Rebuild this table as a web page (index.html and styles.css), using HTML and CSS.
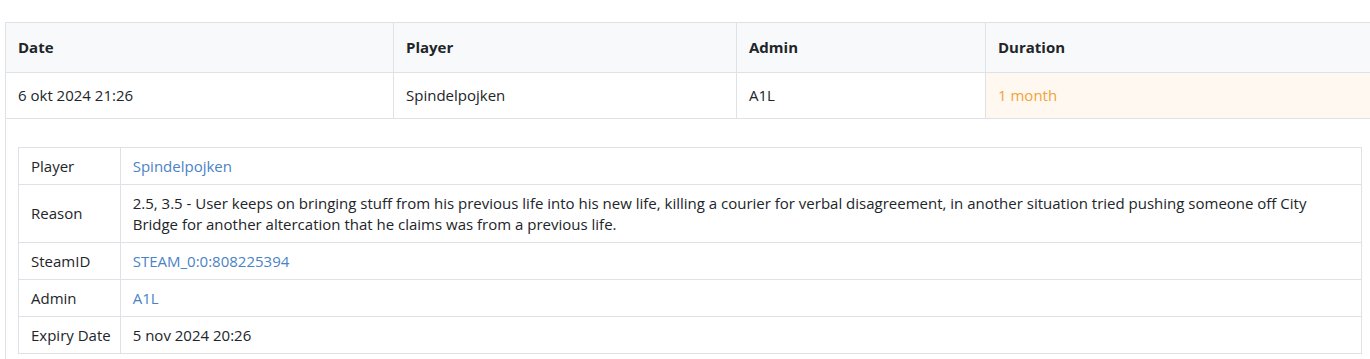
FILE: index.html
```html
<!DOCTYPE html>
<html lang="en">
<head>
<meta charset="utf-8">
<title>Ban details</title>
<link rel="stylesheet" href="styles.css">
</head>
<body>
<div class="page">
  <table class="bans">
    <thead>
      <tr>
        <th class="col-date">Date</th>
        <th class="col-player">Player</th>
        <th class="col-admin">Admin</th>
        <th class="col-duration">Duration</th>
      </tr>
    </thead>
    <tbody>
      <tr>
        <td>6 okt 2024 21:26</td>
        <td>Spindelpojken</td>
        <td>A1L</td>
        <td class="duration">1 month</td>
      </tr>
      <tr>
        <td colspan="4" class="detail-cell">
          <table class="details">
            <tbody>
              <tr><td class="label">Player</td><td><a href="#">Spindelpojken</a></td></tr>
              <tr><td class="label">Reason</td><td>2.5, 3.5 - User keeps on bringing stuff from his previous life into his new life, killing a courier for verbal disagreement, in another situation tried pushing someone off City Bridge for another altercation that he claims was from a previous life.</td></tr>
              <tr><td class="label">SteamID</td><td><a href="#">STEAM_0:0:808225394</a></td></tr>
              <tr><td class="label">Admin</td><td><a href="#">A1L</a></td></tr>
              <tr><td class="label">Expiry Date</td><td>5 nov 2024 20:26</td></tr>
            </tbody>
          </table>
        </td>
      </tr>
    </tbody>
  </table>
</div>
</body>
</html>
```
FILE: styles.css
```css
html, body {
  margin: 0;
  padding: 0;
  overflow: hidden;
  background: #fff;
}
body {
  font-family: "Open Sans", "Liberation Sans", sans-serif;
  font-size: 15px;
  line-height: 21px;
  color: #212529;
}
.page {
  padding: 22px 0 0 5px;
}
.bans {
  border-collapse: collapse;
  table-layout: fixed;
  width: 1369px;
}
.bans th,
.bans td {
  box-sizing: border-box;
  border: 1px solid #dee2e6;
  text-align: left;
  vertical-align: middle;
  padding: 12px 12px;
}
.bans th {
  background: #f8f9fa;
  font-weight: 700;
  padding: 14px 12px;
}
.col-date { width: 388px; }
.col-player { width: 343px; }
.col-admin { width: 249px; }
.col-duration { width: 389px; }
.bans td.duration {
  background: #fef8f1;
  color: #f0a338;
}
.bans td.detail-cell {
  padding: 28px 12px 12px;
}
.details {
  border-collapse: collapse;
  width: 100%;
}
.details td {
  border: 1px solid #dee2e6;
  padding: 7.5px 12px;
  vertical-align: middle;
}
.details td.label {
  width: 1%;
  padding-right: 9px;
  white-space: nowrap;
}
.details a {
  color: #4a83c5;
  text-decoration: none;
}
```
